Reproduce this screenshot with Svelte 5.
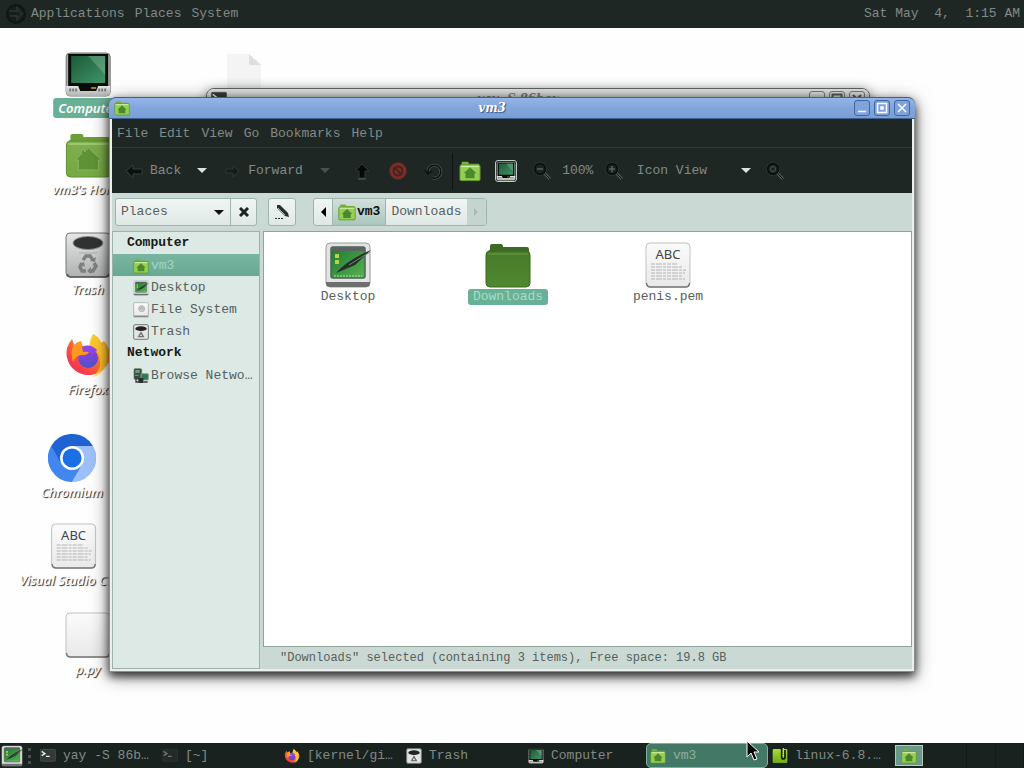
<script lang="ts">
	// A MATE-like desktop: two panels, icons on a white background and a
	// Caja file manager window on top of a background terminal.
	type Shortcut = { label: string; icon: string; x: number; y: number; selected?: boolean };

	const shortcuts: Shortcut[] = [
		{ label: 'Computer', icon: 'computer', x: 88, y: 22, selected: true },
		{ label: "vm3's Home", icon: 'home', x: 88, y: 103 },
		{ label: 'Trash', icon: 'trash', x: 88, y: 203 },
		{ label: 'Firefox', icon: 'firefox', x: 88, y: 303 },
		{ label: 'Chromium', icon: 'chromium', x: 72, y: 406 },
		{ label: 'Visual Studio Code', icon: 'text', x: 74, y: 494 },
		{ label: 'p.py', icon: 'blank', x: 88, y: 583 }
	];

	const menus = ['File', 'Edit', 'View', 'Go', 'Bookmarks', 'Help'];

	const places = [
		{
			heading: 'Computer',
			items: [
				{ label: 'vm3', icon: 'homeSmall' },
				{ label: 'Desktop', icon: 'desktop' },
				{ label: 'File System', icon: 'drive' },
				{ label: 'Trash', icon: 'trashSmall' }
			]
		},
		{ heading: 'Network', items: [{ label: 'Browse Network', icon: 'network' }] }
	];

	const files = [
		{ name: 'Desktop', icon: 'desktop' },
		{ name: 'Downloads', icon: 'folder' },
		{ name: 'penis.pem', icon: 'text' }
	];

	const tasks = [
		{ label: 'yay -S 86b…', icon: 'terminal' },
		{ label: '[~]', icon: 'terminal', dim: true },
		{ label: '[kernel/gi…', icon: 'firefox' },
		{ label: 'Trash', icon: 'trashSmall' },
		{ label: 'Computer', icon: 'computer' },
		{ label: 'vm3', icon: 'homeSmall', active: true },
		{ label: 'linux-6.8.…', icon: 'archive' }
	];

	let currentPlace = $state('vm3');
	let selectedFile = $state('Downloads');
</script>

{#snippet icon(name: string, size: number)}
	<svg class="icon" width={size} height={size} viewBox="0 0 48 48" aria-hidden="true">
		{#if name === 'computer'}
			<rect x="2" y="3" width="44" height="43" rx="4" fill="#a9adab" stroke="#6f7371" />
			<path d="M2 36h44v6a4 4 0 0 1-4 4H6a4 4 0 0 1-4-4z" fill="url(#metal)" />
			<path d="M5 40h9M34 40h9" stroke="#777b79" stroke-width="3" stroke-dasharray="2 1" />
			<path d="M4 4h40v32H34l-2 5H16l-2-5H4z" fill="#080d0a" />
			<rect x="7" y="6" width="34" height="27" fill="url(#screen)" />
			<path d="M24 6h17v19z" fill="#a6d8b8" opacity=".3" />
			<path d="M27 38h5" stroke="#c9a82d" stroke-width="1.5" />
		{:else if name === 'homeSmall'}
			<path d="M6 9V4h14l2 4h22v8H4V9z" fill="#78b03c" />
			<rect x="2" y="11" width="44" height="34" rx="3" fill="#95cf52" stroke="#5c8f2c" stroke-width="2" />
			<path d="M5 14h38" stroke="#d3efa8" stroke-width="3" />
			<path d="M24 16l14 13h-4v11H14V29h-4z" fill="#4b8a2c" />
		{:else if name === 'home' || name === 'folder'}
			{@const plain = name === 'folder'}
			<path
				d="M6 9V5q0-2 2-2h9q2 0 2 3h24q2 0 2 3v8H4V11q0-2 2-2z"
				fill={plain ? '#3c6a22' : '#6c9f3a'}
			/>
			<rect
				x="2"
				y="10"
				width="44"
				height="36"
				rx="4"
				fill={plain ? 'url(#folderDark)' : 'url(#folder)'}
				stroke={plain ? '#3a6821' : '#608f32'}
			/>
			<path d="M4 13h40" stroke={plain ? '#6b9c48' : '#c0df95'} />
			{#if !plain}
				<path
					d="M24 17l13 12h-3v10H14V29h-3l6-6v-4h3v2z"
					fill="#5f9238"
					stroke="#8fbb62"
					stroke-width=".8"
				/>
			{/if}
		{:else if name === 'trash'}
			<rect x="2" y="2" width="44" height="44" rx="4" fill="url(#metal)" stroke="#777b79" />
			<path d="M3 43q1 3 4 3h34q3 0 4-3" fill="none" stroke="#555" stroke-width="1.5" />
			<ellipse cx="24" cy="12" rx="15" ry="6.5" fill="#303232" stroke="#8a8a8a" />
			<path d="M15 22h18" stroke="#aaa" />
			<g fill="none" stroke="#7d807e" stroke-width="3.5">
				<path d="M19 29l3-4h4l3 4" />
				<path d="M30 32l2 3-3 5h-4" />
				<path d="M18 32l-2 4 2 4h4" />
			</g>
			<path d="M26 30l5 1 1-5zM27 36l-4 4 4 3zM15 33l5-2 1 5z" fill="#7d807e" />
		{:else if name === 'trashSmall'}
			<rect x="2" y="2" width="44" height="44" rx="4" fill="#e3e5e4" stroke="#777b79" stroke-width="3" />
			<ellipse cx="24" cy="14" rx="17" ry="7" fill="#202322" />
			<path d="M17 38l7-12 7 12z" fill="none" stroke="#6f7371" stroke-width="4" />
		{:else if name === 'firefox'}
			<path
				d="M3 17q2-6 5-9l2 6q3-3 7-4l1 5 7 1 4-13q7 4 8 9l3-2q6 7 6 17A21.500 21.500 0 1 1 3 17z"
				fill="url(#fire)"
			/>
			<path d="M29 3q8 5 9 13l2-3q6 11 2 22-5 10-14 11 11-8 7-20-1-6-9-8-2-8 3-15z" fill="#ffd52e" opacity=".7" />
			<circle cx="24" cy="27" r="10" fill="url(#globe)" />
			<path d="M9 15q4-4 8-4l2 5q5-2 10 0 5 3 4 6-3-3-8-1-3 4-8 3-6 1-8 7-3-8 0-16z" fill="#ff9820" />
			<path d="M18 16q7-4 15 3l-4 4q-4-3-10-2z" fill="#9046ea" />
		{:else if name === 'chromium'}
			<circle cx="24" cy="24" r="24" fill="#9cc0fa" />
			<path d="M3.200 12a24 24 0 0 0 20.800 36l10.400-18L24 12z" fill="#4287f0" />
			<path d="M3.200 12A24 24 0 0 1 44.800 12L24 12 13.600 30z" fill="#1f62d2" />
			<path d="M24 12h20.800A24 24 0 0 1 24 48l10.400-18z" fill="#9cc0fa" />
			<circle cx="24" cy="24" r="12" fill="#fff" />
			<circle cx="24" cy="24" r="9.500" fill="#1a6fe5" />
		{:else if name === 'text' || name === 'blank'}
			<rect x="2" y="2" width="44" height="44" rx="4" fill="url(#paper)" stroke="#bfc1c0" />
			<path d="M2.500 42q0 4 4 4h35q4 0 4-4" fill="none" stroke="#777" stroke-width="1.500" />
			{#if name === 'text'}
				<text x="24" y="18" text-anchor="middle" class="abc">ABC</text>
				<g stroke="#b4b4b4" stroke-dasharray="4 1 6 1 3 1">
					<path d="M7 23h26M7 26h32M7 29h35M7 32h34M7 35h31M7 38h34" />
				</g>
			{/if}
		{:else if name === 'desktop'}
			<rect x="2" y="2" width="44" height="44" rx="4" fill="#e2e4e2" stroke="#9a9d9a" />
			<path d="M2 41h44v1q0 4-4 4H6q-4 0-4-4z" fill="#6d706e" />
			<rect x="7" y="6" width="34" height="31" rx="2" fill="url(#green)" stroke="#50605a" stroke-width="1.500" />
			<path d="M7 6h34v4H7z" fill="#59665f" />
			<path d="M11 13h4v4h-4zM11 19h4v4h-4z" fill="#b9d24b" />
			<path d="M12 32Q23 19 47 9L31 24l-14 6z" fill="#26302a" />
			<path d="M25 24L46 11" stroke="#7b827e" />
			<path d="M10 35h28" stroke="#b2e39a" stroke-dasharray="2 1" />
		{:else if name === 'drive'}
			<rect x="2" y="2" width="44" height="40" rx="3" fill="url(#paper)" stroke="#9b9e9c" stroke-width="2" />
			<path d="M2 41h44v5H2z" fill="#8a8d8b" />
			<circle cx="26" cy="20" r="9" fill="#c9cccb" stroke="#b4b7b5" stroke-width="3" />
			<path d="M20 22q6-10 11-2" stroke="#8b8b8b" stroke-width="2" fill="none" />
		{:else if name === 'network'}
			<rect x="3" y="2" width="23" height="32" rx="3" fill="#3b4c43" stroke="#68766e" stroke-width="2" />
			<rect x="7" y="6" width="13" height="9" fill="#5da37e" />
			<rect x="24" y="17" width="22" height="19" rx="2" fill="#317653" stroke="#8da098" stroke-width="3" />
			<rect x="16" y="30" width="15" height="15" fill="#292f2c" />
			<path d="M9 24v18h12M31 42h13" stroke="#38423c" stroke-width="4" fill="none" />
			<path d="M6 22h11" stroke="#cf7261" stroke-width="3" />
		{:else if name === 'terminal'}
			<rect x="1" y="4" width="46" height="36" rx="4" fill="#353a38" stroke="#4f5552" stroke-width="2" />
			<path d="M5 10l10 7-10 6M18 25h11" stroke="#e8ecea" stroke-width="4" fill="none" />
		{:else if name === 'archive'}
			<rect x="2" y="3" width="44" height="42" rx="3" fill="url(#archive)" />
			<path d="M29 0v27q0 6 5 6t5-6V6" stroke="#16200b" stroke-width="5" fill="none" />
			<path d="M34 0v25" stroke="#dbe8c2" stroke-width="3" stroke-dasharray="4 3" />
		{/if}
	</svg>
{/snippet}

{#snippet tool(name: string)}
	<svg class="icon" width="20" height="20" viewBox="0 0 20 20" aria-hidden="true">
		{#if name === 'back'}
			<path d="M2 10l7-6v4h9v5H9v4z" fill="#0b0f0d" stroke="#35413b" />
		{:else if name === 'forward'}
			<path d="M17 10l-6-5v3H4v4h7v4z" fill="#151c18" stroke="#2f3934" />
		{:else if name === 'up'}
			<path d="M10 3l7 7h-4v7H7v-7H3z" fill="#060907" stroke="#303a35" />
			<path d="M6 18h8" stroke="#59625d" />
		{:else if name === 'stop'}
			<circle cx="10" cy="10" r="8.500" fill="#7c2f29" stroke="#542522" />
			<circle cx="10" cy="10" r="4.500" fill="none" stroke="#48211d" stroke-width="2" />
			<path d="M7 7l6 6" stroke="#48211d" stroke-width="2" />
		{:else if name === 'reload'}
			<path d="M4 12a6.500 6.500 0 1 1 5 5" fill="none" stroke="#4c5651" stroke-width="3" />
			<path d="M4 12a6.500 6.500 0 1 1 5 5M1 9l3 4 4-3" fill="none" stroke="#0b100d" stroke-width="1.500" />
		{:else}
			<path d="M12 12l6 6" stroke="#505954" stroke-width="3" />
			<path d="M12 12l6 6" stroke="#0c110e" />
			<circle cx="8" cy="8" r="5.500" fill="#1c2421" stroke="#080c0a" stroke-width="2" />
			<circle cx="8" cy="8" r="6.500" fill="none" stroke="#3a443f" stroke-width=".6" />
			{#if name === 'search'}
				<circle cx="8" cy="8" r="2.500" fill="none" stroke="#4d5751" />
			{:else}
				<path d="M5 8h6" stroke="#58615c" stroke-width="1.500" />
				{#if name === 'zoomIn'}<path d="M8 5v6" stroke="#58615c" stroke-width="1.500" />{/if}
			{/if}
		{/if}
	</svg>
{/snippet}

{#snippet caret()}
	<svg class="icon" width="10" height="5" viewBox="0 0 10 5" aria-hidden="true">
		<path d="M0 0h10L5 5z" fill="currentColor" />
	</svg>
{/snippet}

{#snippet windowButtons()}
	<div class="window-buttons">
		<button aria-label="Minimize">
			<svg width="14" height="14" viewBox="0 0 14 14"><path d="M3 10.500h8" /></svg>
		</button>
		<button aria-label="Maximize">
			<svg width="14" height="14" viewBox="0 0 14 14"><path d="M2.500 2.500h9v9h-9zM6 6h2v2H6z" /></svg>
		</button>
		<button aria-label="Close">
			<svg width="14" height="14" viewBox="0 0 14 14"><path d="M3 3l8 8M11 3l-8 8" /></svg>
		</button>
	</div>
{/snippet}

<!-- Gradients shared by every icon -->
<svg class="defs" width="0" height="0" aria-hidden="true">
	<defs>
		<linearGradient id="metal" x2="0" y2="1">
			<stop offset="0" stop-color="#e6e6e6" />
			<stop offset="1" stop-color="#b0b2b1" />
		</linearGradient>
		<linearGradient id="screen" x2="1" y2="1">
			<stop offset="0" stop-color="#1d5a39" />
			<stop offset="1" stop-color="#3f9468" />
		</linearGradient>
		<linearGradient id="folder" x2="0" y2="1">
			<stop offset="0" stop-color="#7fae4e" />
			<stop offset="1" stop-color="#74a944" />
		</linearGradient>
		<linearGradient id="folderDark" x2="0" y2="1">
			<stop offset="0" stop-color="#487a2a" />
			<stop offset="1" stop-color="#50882f" />
		</linearGradient>
		<linearGradient id="paper" x2="0" y2="1">
			<stop offset="0" stop-color="#fbfbfb" />
			<stop offset="1" stop-color="#e9e9e9" />
		</linearGradient>
		<linearGradient id="green" x2="1" y2="1">
			<stop offset="0" stop-color="#1e7832" />
			<stop offset="1" stop-color="#58b252" />
		</linearGradient>
		<linearGradient id="fire" x1="1" x2="0" y2="1">
			<stop offset="0" stop-color="#ffe22f" />
			<stop offset=".4" stop-color="#ff8a24" />
			<stop offset=".75" stop-color="#f83d4b" />
			<stop offset="1" stop-color="#e22b70" />
		</linearGradient>
		<linearGradient id="globe" x2="0" y2="1">
			<stop offset="0" stop-color="#9a3ee8" />
			<stop offset="1" stop-color="#4a53c8" />
		</linearGradient>
		<linearGradient id="archive" x2="0" y2="1">
			<stop offset="0" stop-color="#a9dc35" />
			<stop offset="1" stop-color="#6fa81b" />
		</linearGradient>
	</defs>
</svg>

<div class="screen">
	<header class="panel top">
		<svg class="icon" width="20" height="20" viewBox="0 0 20 20" aria-hidden="true">
			<circle cx="10" cy="10" r="9" fill="#161e1b" stroke="#0f1613" stroke-width="2" />
			<path d="M3 7h8V4l5 6-5 5v-3H4" fill="none" stroke="#26302b" stroke-width="2" />
		</svg>
		<nav class="panel-menu">
			<button>Applications</button>
			<button>Places</button>
			<button>System</button>
		</nav>
		<time class="clock">Sat May&nbsp; 4,&nbsp; 1:15 AM</time>
	</header>

	<main class="desktop">
		<svg class="ghost-file" width="36" height="48" viewBox="0 0 36 48" aria-hidden="true">
			<path d="M1 0h22l12 11v37H1z" fill="#f4f4f4" />
			<path d="M23 0l12 11H25q-2 0-2-2z" fill="#dedede" />
		</svg>

		{#each shortcuts as item}
			<button
				class="shortcut"
				class:selected={item.selected}
				style="left: {item.x}px; top: {item.y}px"
			>
				{@render icon(item.icon, 48)}
				<span>{item.label}</span>
			</button>
		{/each}

		<section class="window background" aria-label="yay -S 86box">
			<div class="titlebar">
				{@render icon('terminal', 16)}
				<h2>yay -S 86box</h2>
				{@render windowButtons()}
			</div>
		</section>

		<section class="window front" aria-label="vm3">
			<div class="titlebar">
				{@render icon('homeSmall', 16)}
				<h2>vm3</h2>
				{@render windowButtons()}
			</div>

			<div class="client">
				<nav class="menubar">
					{#each menus as menu}
						<button>{menu}</button>
					{/each}
				</nav>

				<div class="toolbar">
					<button class="labelled">{@render tool('back')}Back</button>
					<button class="drop" aria-label="Back history">{@render caret()}</button>
					<button class="labelled">{@render tool('forward')}Forward</button>
					<button class="drop muted" aria-label="Forward history">{@render caret()}</button>
					<button class="tool" aria-label="Up">{@render tool('up')}</button>
					<button class="tool" aria-label="Stop">{@render tool('stop')}</button>
					<button class="tool" aria-label="Reload">{@render tool('reload')}</button>
					<button class="tool divided" aria-label="Home">{@render icon('homeSmall', 22)}</button>
					<button class="tool" aria-label="Computer">
						<span class="lit">{@render icon('computer', 20)}</span>
					</button>
					<button class="tool" aria-label="Zoom out">{@render tool('zoomOut')}</button>
					<span class="zoom">100%</span>
					<button class="tool" aria-label="Zoom in">{@render tool('zoomIn')}</button>
					<label class="picker view-picker">
						<select aria-label="View">
							<option>Icon View</option>
							<option>List View</option>
							<option>Compact View</option>
						</select>
						{@render caret()}
					</label>
					<button class="tool" aria-label="Search">{@render tool('search')}</button>
				</div>

				<div class="location">
					<div class="group side-group">
						<label class="picker side-picker">
							<select aria-label="Side pane">
								<option>Places</option>
								<option>Tree</option>
								<option>History</option>
							</select>
							{@render caret()}
						</label>
						<button class="close-side" aria-label="Close side pane">
							<svg class="icon" width="10" height="10" viewBox="0 0 10 10">
								<path d="M1 1l8 8M9 1L1 9" stroke="#1d2421" stroke-width="3" />
							</svg>
						</button>
					</div>

					<div class="group edit-group">
						<button aria-label="Edit location">
							<svg class="icon" width="16" height="16" viewBox="0 0 16 16">
								<path d="M3 1l3 0 8 8 1 4-4-1-8-8z" fill="#27302c" />
								<path d="M4 4l7 7" stroke="#aab4af" />
								<path d="M1 14.500h9" stroke="#27302c" stroke-dasharray="2 1" />
							</svg>
						</button>
					</div>

					<div class="group path">
						<button class="step" aria-label="Previous folders">
							<svg class="icon" width="5" height="10" viewBox="0 0 5 10">
								<path d="M5 0v10L0 5z" />
							</svg>
						</button>
						<button class="crumb current">{@render icon('homeSmall', 18)}vm3</button>
						<button class="crumb">Downloads</button>
						<button class="step last" disabled aria-label="Next folders">
							<svg class="icon" width="5" height="8" viewBox="0 0 5 8">
								<path d="M0 0v8l4-4z" fill="#a9b9b3" />
							</svg>
						</button>
					</div>
				</div>

				<div class="body">
					<aside class="sidebar">
						{#each places as group}
							<h3>{group.heading}</h3>
							{#each group.items as place}
								<button
									class:selected={place.label === currentPlace}
									onclick={() => (currentPlace = place.label)}
								>
									{@render icon(place.icon, 16)}
									<span>{place.label}</span>
								</button>
							{/each}
						{/each}
					</aside>

					<div class="content">
						<div class="files">
							{#each files as file}
								<button
									class:selected={file.name === selectedFile}
									onclick={() => (selectedFile = file.name)}
								>
									{@render icon(file.icon, 48)}
									<span>{file.name}</span>
								</button>
							{/each}
						</div>
						<p class="status" role="status">
							"Downloads" selected (containing 3 items), Free space: 19.8 GB
						</p>
					</div>
				</div>
			</div>
		</section>
	</main>

	<footer class="panel bottom">
		<button class="show-desktop" aria-label="Show desktop">{@render icon('desktop', 22)}</button>
		<span class="grip"></span>
		<div class="tasks">
			{#each tasks as task}
				<button class:active={task.active} class:dim={task.dim}>
					{@render icon(task.icon, 16)}
					<span>{task.label}</span>
				</button>
			{/each}
		</div>
		<div class="workspaces">
			<button class="on" aria-label="Workspace 1">{@render icon('homeSmall', 16)}</button>
			<button aria-label="Workspace 2"></button>
			<button aria-label="Workspace 3"></button>
			<button aria-label="Workspace 4"></button>
		</div>
	</footer>

	<svg class="pointer" width="14" height="22" viewBox="0 0 14 22" aria-hidden="true">
		<path d="M1 1v16l4-4 3 7 3-1-3-7h5z" fill="#000" stroke="#fff" />
	</svg>
</div>

<style>
	:global(body) {
		margin: 0;
		background: #fefefe;
	}

	.screen {
		position: relative;
		display: flex;
		flex-direction: column;
		height: 100vh;
		overflow: hidden;
		color: #56605c;
		font: 13px/16px 'Liberation Mono', monospace;
	}

	button,
	select {
		margin: 0;
		padding: 0;
		border: 0;
		border-radius: 0;
		background: none;
		color: inherit;
		font: inherit;
	}

	.icon {
		display: block;
		flex: none;
	}

	.defs {
		position: absolute;
	}

	.abc {
		font: 13px 'Noto Sans', sans-serif;
		fill: #444;
		text-shadow: none;
	}

	/* Panels */
	.panel {
		display: flex;
		align-items: center;
		flex: none;
		background: #1f2725;
		color: #818a86;
	}

	.top {
		height: 28px;
		padding: 0 4px 0 6px;
		gap: 5px;
		box-sizing: border-box;
	}

	.panel-menu {
		display: flex;
		gap: 10px;
	}

	.clock {
		margin-left: auto;
	}

	.bottom {
		height: 25px;
		background: #1a2220;
	}

	.show-desktop {
		padding: 0 1px;
	}

	.grip {
		height: 16px;
		margin: 0 5px 0 4px;
		border-left: 3px dotted #47504c;
	}

	.tasks {
		display: flex;
		flex: 0 1 854px;
		height: 25px;
		min-width: 0;
	}

	.tasks button {
		display: flex;
		align-items: center;
		flex: 1;
		gap: 7px;
		min-width: 0;
		padding: 0 3px;
		border: 1px solid transparent;
		white-space: nowrap;
	}

	.tasks .dim :global(svg) {
		opacity: 0.4;
	}

	.tasks .active {
		border-color: #7bb39f;
		border-radius: 5px;
		background: #447866;
		color: #8fae9f;
	}

	.workspaces {
		display: flex;
		flex: 1;
		height: 25px;
		padding-left: 5px;
	}

	.workspaces button {
		display: grid;
		place-items: center;
		flex: 1;
		border-right: 1px solid #131a17;
	}

	.workspaces .on {
		flex: none;
		width: 28px;
		height: 21px;
		margin: 2px 16px 0 0;
		border: 1px solid #b5c9c0;
		background: #6b9989;
	}

	/* Desktop icons */
	.desktop {
		position: relative;
		flex: 1;
	}

	.ghost-file {
		position: absolute;
		left: 226px;
		top: 26px;
	}

	.shortcut {
		position: absolute;
		display: flex;
		flex-direction: column;
		align-items: center;
		transform: translateX(-50%);
		color: #fff;
		font: italic 500 13px/20px 'Noto Sans', sans-serif;
		white-space: nowrap;
		text-shadow: 1px 1px 1px #222;
	}

	.shortcut span {
		padding: 0 5px;
		border-radius: 3px;
	}

	.shortcut.selected span {
		background: #68b197;
		font-weight: 600;
		text-shadow: none;
	}

	/* Windows */
	.window {
		position: absolute;
		display: flex;
		flex-direction: column;
		box-sizing: border-box;
		border: 1px solid #5b6461;
		border-radius: 8px 8px 0 0;
		background: #eceeed;
	}

	.background {
		inset: 60px 154px 300px 206px;
		box-shadow: 0 2px 12px rgba(0, 0, 0, 0.5);
	}

	.front {
		inset: 69px 109px 71px 109px;
		border-color: #87908d;
		box-shadow:
			0 4px 8px rgba(0, 0, 0, 0.7),
			0 4px 18px rgba(0, 0, 0, 0.5);
	}

	.titlebar {
		display: flex;
		align-items: center;
		flex: none;
		height: 20px;
		padding: 0 4px;
		border-radius: 7px 7px 0 0;
		background: linear-gradient(#e0e0e0, #b9b9b9);
		color: #777;
	}

	.front .titlebar {
		margin: -1px -1px 0;
		padding: 0 5px;
		border: solid #3f6190;
		border-width: 1px 0;
		background: linear-gradient(#93b4e8, #82a6dc 50%, #789ed6);
		color: #fff;
	}

	h2 {
		flex: 1;
		margin: 0;
		text-align: center;
		font: italic bold 13px/16px 'DejaVu Serif Condensed', 'DejaVu Serif', serif;
	}

	.front h2 {
		text-shadow: 1px 1px 1px #34558a;
	}

	.window-buttons {
		display: flex;
		gap: 4px;
	}

	.window-buttons button {
		width: 16px;
		height: 16px;
		border: 1px solid #777;
		border-radius: 3px;
	}

	.front .window-buttons button {
		border-color: #3e659e;
		background: #7fa3da;
	}

	.window-buttons svg {
		display: block;
		fill: none;
		stroke: #555;
		stroke-width: 2;
	}

	.front .window-buttons svg {
		stroke: #fff;
		stroke-width: 1.5;
	}

	.client {
		display: flex;
		flex-direction: column;
		flex: 1;
		min-height: 0;
		margin: 0 2px 2px;
		background: #cbd9d4;
	}

	.menubar,
	.toolbar {
		display: flex;
		align-items: center;
		box-sizing: border-box;
		background: #1f2725;
		color: #818a86;
	}

	.menubar {
		gap: 11px;
		height: 29px;
		padding: 2px 5px 0;
		border-bottom: 1px solid #2c3b36;
	}

	.toolbar {
		height: 45px;
		padding-left: 12px;
	}

	.labelled {
		display: flex;
		align-items: center;
		gap: 6px;
	}

	.drop {
		display: grid;
		place-items: center;
		width: 41px;
		height: 32px;
		color: #dce3e0;
	}

	.drop.muted {
		padding-left: 4px;
		color: #49524e;
	}

	.tool {
		display: grid;
		place-items: center;
		width: 36px;
		height: 36px;
	}

	.divided {
		border-left: 1px solid #0d1311;
	}

	.lit {
		border-radius: 2px;
		outline: 1px solid #b7cfc3;
	}

	.zoom {
		width: 36px;
		text-align: center;
	}

	/* Drop-down with its own caret laid over the right end */
	.picker {
		display: grid;
		align-items: center;
	}

	.picker select,
	.picker :global(svg) {
		grid-area: 1 / 1;
	}

	.picker :global(svg) {
		justify-self: end;
		margin-right: 6px;
		pointer-events: none;
	}

	.picker select {
		height: 26px;
		padding: 0 5px;
		appearance: none;
		outline: none;
	}

	.view-picker {
		width: 125px;
	}

	.view-picker :global(svg) {
		color: #dce3e0;
	}

	.location {
		display: flex;
		align-items: center;
		height: 38px;
		padding-left: 3px;
	}

	.group {
		display: flex;
		box-sizing: border-box;
		height: 28px;
		border: 1px solid #9db5ac;
		border-radius: 3px;
		background: linear-gradient(#f0f5f3, #dfe8e5);
	}

	.group button {
		display: flex;
		align-items: center;
		justify-content: center;
	}

	.side-picker {
		width: 114px;
	}

	.side-picker :global(svg) {
		color: #111;
	}

	.close-side {
		width: 26px;
		border-left: 1px solid #9db5ac;
	}

	.edit-group {
		margin: 0 17px 0 11px;
	}

	.edit-group button {
		width: 26px;
	}

	.step {
		width: 18px;
	}

	.step.last {
		width: 19px;
		background: #c5d4cf;
	}

	.crumb {
		padding: 0 5px;
		border-left: 1px solid #9db5ac;
	}

	.crumb.current {
		gap: 1px;
		background: linear-gradient(#d3dfdb, #a9c7bc);
		color: #111;
		font-weight: bold;
	}

	.body {
		display: flex;
		flex: 1;
		gap: 3px;
		min-height: 0;
	}

	.sidebar {
		width: 146px;
		flex: none;
		border: 1px solid #9db1a9;
		background: #dce9e4;
	}

	h3 {
		margin: 0;
		padding-left: 14px;
		color: #151b18;
		font: bold 13px/22px 'Liberation Mono', monospace;
	}

	.sidebar button {
		display: flex;
		align-items: center;
		gap: 2px;
		width: 100%;
		height: 22px;
		padding: 1px 0 0 20px;
		text-align: left;
	}

	.sidebar button span {
		overflow: hidden;
		text-overflow: ellipsis;
		white-space: nowrap;
	}

	.sidebar .selected {
		background: linear-gradient(#78b6a1, #68a892);
		color: #a4d5c2;
	}

	.content {
		display: flex;
		flex: 1;
		flex-direction: column;
		min-width: 0;
	}

	.files {
		display: flex;
		align-items: flex-start;
		flex: 1;
		padding: 9px 4px;
		border: 1px solid #8fa39b;
		background: #fff;
	}

	.files button {
		display: flex;
		flex-direction: column;
		align-items: center;
		width: 160px;
	}

	.files span {
		padding: 0 5px;
		border-radius: 3px;
	}

	.files .selected span {
		background: #68b197;
		color: #a9dcc8;
	}

	.status {
		margin: 0;
		padding: 0 17px;
		font-size: 12px;
		line-height: 22px;
		white-space: nowrap;
	}

	.pointer {
		position: absolute;
		left: 746px;
		bottom: 6px;
	}
</style>
